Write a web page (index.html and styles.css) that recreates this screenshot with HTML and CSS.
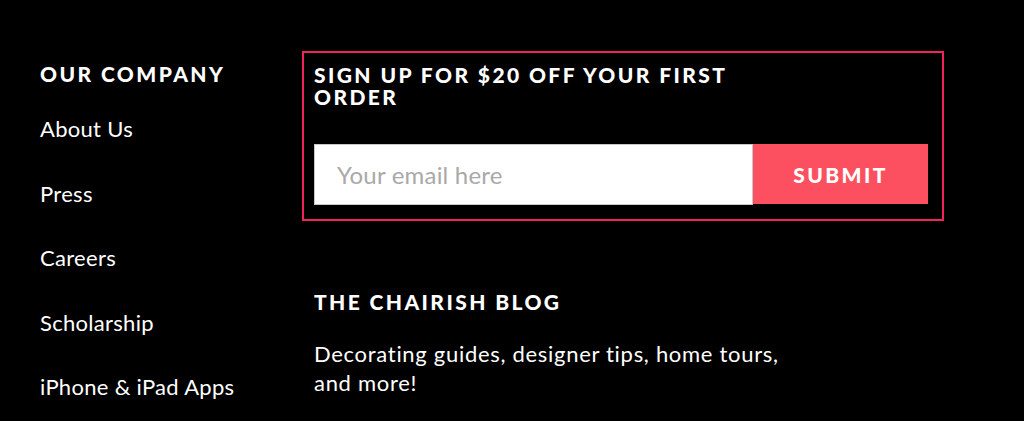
FILE: index.html
```html
<!DOCTYPE html>
<html>
<head>
<meta charset="utf-8">
<link rel="stylesheet" href="styles.css">
</head>
<body>
<footer class="footer">
  <div class="col-company">
    <h3 class="heading">OUR COMPANY</h3>
    <ul class="links">
      <li><a href="#">About Us</a></li>
      <li><a href="#">Press</a></li>
      <li><a href="#">Careers</a></li>
      <li><a href="#">Scholarship</a></li>
      <li><a href="#">iPhone &amp; iPad Apps</a></li>
    </ul>
  </div>
  <div class="col-right">
    <div class="signup">
      <h3 class="heading signup-title">SIGN UP FOR $20 OFF YOUR FIRST ORDER</h3>
      <form class="signup-form">
        <input class="email" type="text" placeholder="Your email here">
        <button class="submit" type="button">SUBMIT</button>
      </form>
    </div>
    <div class="blog">
      <h3 class="heading">THE CHAIRISH BLOG</h3>
      <p class="blog-text">Decorating guides, designer tips, home tours, and more!</p>
    </div>
  </div>
</footer>
</body>
</html>
```
FILE: styles.css
```css
html, body {
  margin: 0;
  padding: 0;
  background: #000;
}
body {
  font-family: Lato, "Liberation Sans", sans-serif;
  color: #fff;
  height: 421px;
  overflow: hidden;
}
.footer {
  display: flex;
  padding: 51px 0 0 40px;
}
.heading {
  margin: 0;
  font-size: 21px;
  line-height: 22px;
  font-weight: 900;
  letter-spacing: 2.4px;
  color: #fff;
}
.col-company {
  width: 262px;
  padding-top: 12px;
}
.links {
  list-style: none;
  margin: 0;
  padding: 0;
  display: flex;
  flex-direction: column;
  gap: 40.5px;
  margin-top: 32px;
}
.links a {
  color: #fff;
  text-decoration: none;
  font-size: 22px;
  line-height: 24px;
  letter-spacing: 0.3px;
}
.col-right {
  display: flex;
  flex-direction: column;
}
.signup {
  width: 614px;
  border: 2px solid #f0245d;
  padding: 11px 14px 14px 10px;
}
.signup-title {
  width: 460px;
}
.signup-form {
  display: flex;
  margin-top: 36px;
}
.email {
  width: 439px;
  height: 61px;
  box-sizing: border-box;
  border: 1px solid #c8c8c8;
  padding: 0 0 0 22px;
  font-family: Lato, "Liberation Sans", sans-serif;
  font-size: 24px;
  letter-spacing: 0.2px;
  color: #333;
  outline: none;
}
.email::placeholder {
  color: #a9a9a9;
}
.submit {
  width: 175px;
  height: 60px;
  border: none;
  background: #fc5060;
  color: #fff;
  font-family: Lato, "Liberation Sans", sans-serif;
  font-size: 21px;
  font-weight: 900;
  letter-spacing: 2.4px;
  cursor: pointer;
}
.blog {
  padding: 70px 0 0 12px;
}
.blog-text {
  margin: 26px 0 0;
  width: 480px;
  font-size: 22px;
  line-height: 29px;
  letter-spacing: 0.7px;
}
```
